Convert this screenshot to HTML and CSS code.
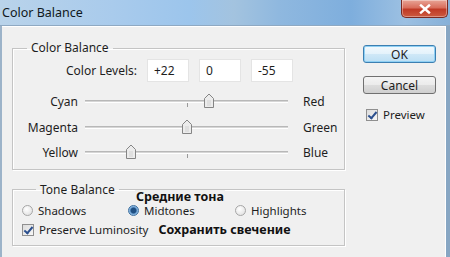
FILE: index.html
```html
<!DOCTYPE html>
<html lang="en">

<head>
    <meta charset="UTF-8">
    <title>Color Balance</title>
    <link rel="stylesheet" href="styles.css">
</head>

<body>
    <div class="window">
        <header class="titlebar">
            <span class="title">Color Balance</span>
            <button class="close-btn" aria-label="Close">
                <svg width="12" height="10" viewBox="0 0 12 10">
                    <path d="M2 1.5 L10 8.5 M10 1.5 L2 8.5" stroke="#fff" stroke-width="2.4" stroke-linecap="square"/>
                </svg>
            </button>
        </header>

        <div class="client">
            <div class="main-col">
                <fieldset class="group color-group">
                    <legend>Color Balance</legend>
                    <div class="levels-row">
                        <label class="levels-label">Color Levels:</label>
                        <input class="level-input" type="text" value="+22">
                        <input class="level-input" type="text" value="0">
                        <input class="level-input" type="text" value="-55">
                    </div>

                    <div class="sliders">
                        <div class="slider-row">
                            <span class="left-label">Cyan</span>
                            <div class="track">
                                <span class="tick"></span>
                                <span class="thumb" style="left: 61%">
                                    <svg width="12" height="16" viewBox="0 0 12 16"><path d="M1.5 5.5 L6 1 L10.5 5.5 V14.5 H1.5 Z" fill="#ececec" stroke="#858585"/><path d="M4 8 H8 M4 10 H8 M4 12 H8" stroke="#d2d2d2"/></svg>
                                </span>
                            </div>
                            <span class="right-label">Red</span>
                        </div>
                        <div class="slider-row">
                            <span class="left-label">Magenta</span>
                            <div class="track">
                                <span class="tick"></span>
                                <span class="thumb" style="left: 50%">
                                    <svg width="12" height="16" viewBox="0 0 12 16"><path d="M1.5 5.5 L6 1 L10.5 5.5 V14.5 H1.5 Z" fill="#ececec" stroke="#858585"/><path d="M4 8 H8 M4 10 H8 M4 12 H8" stroke="#d2d2d2"/></svg>
                                </span>
                            </div>
                            <span class="right-label">Green</span>
                        </div>
                        <div class="slider-row">
                            <span class="left-label">Yellow</span>
                            <div class="track">
                                <span class="tick"></span>
                                <span class="thumb" style="left: 22.5%">
                                    <svg width="12" height="16" viewBox="0 0 12 16"><path d="M1.5 5.5 L6 1 L10.5 5.5 V14.5 H1.5 Z" fill="#ececec" stroke="#858585"/><path d="M4 8 H8 M4 10 H8 M4 12 H8" stroke="#d2d2d2"/></svg>
                                </span>
                            </div>
                            <span class="right-label">Blue</span>
                        </div>
                    </div>
                </fieldset>

                <fieldset class="group tone-group">
                    <legend>Tone Balance</legend>
                    <span class="note note-mid">Средние тона</span>
                    <div class="radio-row">
                        <label class="option"><span class="radio"></span>Shadows</label>
                        <label class="option"><span class="radio checked"></span>Midtones</label>
                        <label class="option"><span class="radio"></span>Highlights</label>
                    </div>
                    <div class="check-row">
                        <label class="option"><span class="check"></span>Preserve Luminosity</label>
                        <span class="note">Сохранить свечение</span>
                    </div>
                </fieldset>
            </div>

            <div class="side-col">
                <button class="btn btn-ok">OK</button>
                <button class="btn">Cancel</button>
                <label class="option preview"><span class="check"></span>Preview</label>
            </div>
        </div>
    </div>
</body>

</html>
```

FILE: styles.css
```css
/* Reset */

* {
    margin: 0;
    padding: 0;
    box-sizing: border-box;
}

body {
    width: 450px;
    height: 257px;
    overflow: hidden;
    font-family: "Noto Sans", Arial, sans-serif;
    font-size: 11.5px;
    color: #1e1e1e;
    background: #f0f0f0;
}

/* Window frame */

.window {
    width: 450px;
    height: 257px;
    display: flex;
    flex-direction: column;
}

.titlebar {
    height: 26px;
    flex: none;
    display: flex;
    justify-content: space-between;
    align-items: flex-start;
    padding-left: 2px;
    padding-right: 2px;
    background: linear-gradient(90deg, #b9d3ea 0%, #a9cbec 25%, #9cc5ec 42%, #a3c3df 52%, #8fb8df 62%, #7eaedd 78%, #9cc0e2 90%, #86b0d8 100%);
    border-bottom: 1px solid #8fa9c2;
}

.title {
    font-size: 12.5px;
    line-height: 25px;
    color: #101820;
}

.close-btn {
    width: 47px;
    height: 18px;
    border: 1px solid #7b2a22;
    border-top: none;
    border-radius: 0 0 5px 5px;
    background: linear-gradient(180deg, #e8a597 0%, #d96e5c 45%, #c03a26 55%, #cc5a40 100%);
    display: flex;
    align-items: center;
    justify-content: center;
    box-shadow: inset 0 0 0 1px rgba(255, 255, 255, 0.35);
}

.client {
    flex: 1;
    display: flex;
    gap: 18px;
    padding: 14px 0 0 10px;
    border-left: 2px solid #9cb3c9;
    border-right: 4px solid #87a6c3;
    box-shadow: inset -1px 0 0 #ffffff, inset 0 1px 0 #ffffff;
}

/* Group boxes */

.main-col {
    width: 333px;
    display: flex;
    flex-direction: column;
    gap: 12px;
}

.group {
    border: 1px solid #c4c4c4;
    box-shadow: inset 1px 1px 0 #ffffff, 1px 1px 0 #ffffff;
    position: relative;
}

.group legend {
    margin-left: 14px;
    padding: 0 4px;
    font-size: 12px;
    line-height: 16px;
}

.color-group {
    padding: 3px 0 3px;
}

.levels-row {
    display: flex;
    align-items: center;
    gap: 10px;
    height: 23px;
}

.levels-label {
    width: 124px;
    text-align: right;
    font-size: 12px;
}

.level-input {
    width: 42px;
    height: 23px;
    border: 1px solid #e4e4e4;
    background: #fff;
    padding-left: 6px;
    font-family: inherit;
    font-size: 12px;
    color: #1e1e1e;
}

.sliders {
    margin-top: 7px;
}

.slider-row {
    display: grid;
    grid-template-columns: 65px 203px auto;
    column-gap: 7px;
    align-items: center;
    height: 25.5px;
}

.left-label {
    text-align: right;
    font-size: 12px;
}

.right-label {
    margin-left: 8px;
    font-size: 12px;
}

.track {
    position: relative;
    height: 3px;
    border-top: 1px solid #b8b8b8;
    border-bottom: 1px solid #ffffff;
    background: #d6d6d6;
}

.tick {
    position: absolute;
    left: 50%;
    top: 2px;
    width: 1px;
    height: 4px;
    background: #9a9a9a;
}

.thumb {
    position: absolute;
    top: -8px;
    width: 12px;
    height: 16px;
    margin-left: -6px;
    display: block;
}

.thumb svg {
    display: block;
}

/* Tone balance */

.tone-group {
    padding: 4px 0 5px 9px;
}

.radio-row {
    display: grid;
    grid-template-columns: 106px 107px auto;
    height: 18px;
    align-items: center;
}

.check-row {
    display: flex;
    align-items: center;
    height: 20px;
    gap: 10px;
}

.option {
    display: flex;
    align-items: center;
    gap: 5px;
    font-size: 11.5px;
}

.radio {
    width: 11px;
    height: 11px;
    border-radius: 50%;
    border: 1px solid #a6a6a6;
    background: radial-gradient(circle at 40% 35%, #ffffff 0%, #e6e6e6 70%);
}

.radio.checked {
    border-color: #3c6f9f;
    background: radial-gradient(circle, #1f4f82 0 2.5px, #6fa4d6 3.5px, #d7e9f7 100%);
}

.check {
    position: relative;
    width: 12px;
    height: 12px;
    border: 1px solid #8f8f8f;
    background: linear-gradient(135deg, #dcdcdc 0%, #f7f7f7 100%);
}

.check::after {
    content: "";
    position: absolute;
    left: 3px;
    top: 0;
    width: 3px;
    height: 7px;
    border: solid #2b4f8e;
    border-width: 0 2px 2px 0;
    transform: rotate(40deg);
}

.note {
    font-size: 12.5px;
    font-weight: bold;
    color: #111;
}

.note-mid {
    position: absolute;
    left: 122px;
    top: -8px;
    padding: 0 1px;
    line-height: 14px;
    background: #f0f0f0;
}

/* Side buttons */

.side-col {
    width: 73px;
    padding-top: 5px;
    display: flex;
    flex-direction: column;
}

.btn {
    height: 18px;
    border: 1px solid #707070;
    border-radius: 3px;
    background: linear-gradient(180deg, #f4f4f4 0%, #ebebeb 50%, #dddddd 51%, #cfcfcf 100%);
    font-family: inherit;
    font-size: 12px;
    color: #1e1e1e;
    margin-bottom: 13px;
}

.btn-ok {
    border-color: #3c7fb1;
    box-shadow: inset 0 0 0 1px #8fd0f4;
    background: linear-gradient(180deg, #f2f9fd 0%, #e3f2fb 50%, #cfe8f7 51%, #bcdff4 100%);
}

.preview {
    padding-left: 3px;
}
```
